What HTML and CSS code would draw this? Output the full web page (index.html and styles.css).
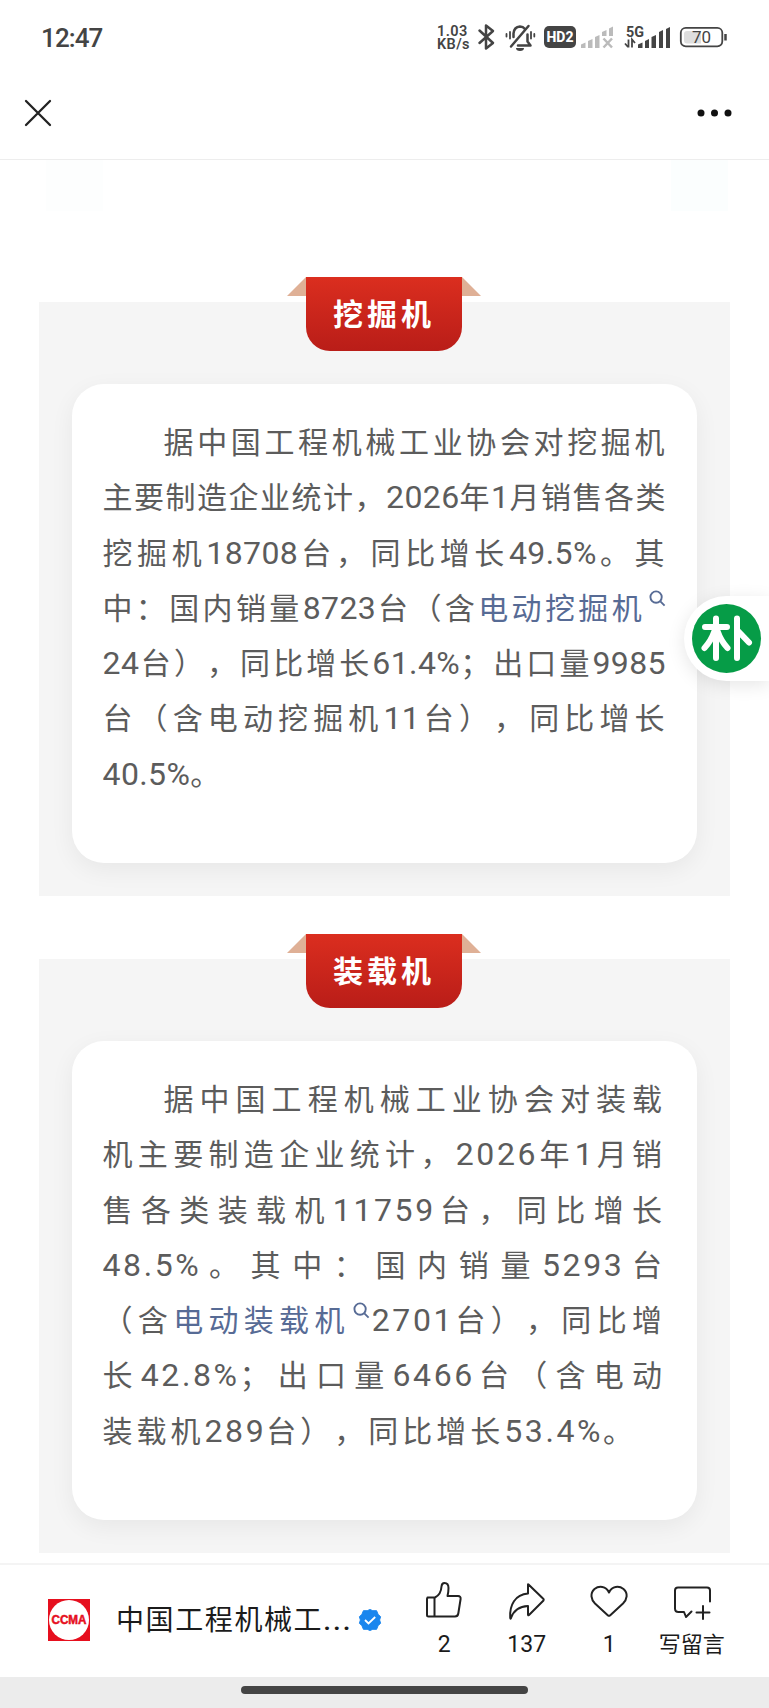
FILE: index.html
```html
<!DOCTYPE html>
<html lang="zh-CN">
<head>
<meta charset="utf-8">
<title>中国工程机械工业协会</title>
<link rel="stylesheet" href="styles.css">
</head>
<body>
<div class="screen">
  <header class="status">
    <span class="clock">12:47</span>
    <span class="speed"><span>1.03</span><span>KB/s</span></span>
    <svg class="status-icons" viewBox="470 15 260 45" width="260" height="45">
      <g fill="none" stroke="#444" stroke-width="2.5" stroke-linejoin="round" stroke-linecap="round">
        <path d="M479.500 30.500L493 43L486 48.500V25.500L493 31L479.500 43"/>
        <path d="M518 45.500H530.500L527.500 41.500V34.500M525 29Q523 26.500 520 26.500Q514 27 513.500 33.500V37"/>
        <path d="M511 46.500L528.500 26"/>
        <path d="M510 32V38.500M531 32V38.500M506.500 34V36.500M534.300 34V36.500" stroke-width="1.800"/>
      </g>
      <path d="M516 48h8a4 3 0 0 1-8 0z" fill="#444"/>
      <rect x="544" y="26" width="32" height="22" rx="5" fill="#444"/>
      <text class="hd" x="560" y="42" text-anchor="middle" textLength="27" lengthAdjust="spacingAndGlyphs">HD2</text>
      <g fill="#bbb">
        <path d="M581 48v-3.500l4.500-2V48zM588 48v-7l4.500-2V48zM595 48V37l4.500-2V48zM602 36v-4l4.500-2v6zM609 36v-7.500l4-2V36z"/>
      </g>
      <path d="M603.500 38.500l8.500 9M612 38.500l-8.500 9" stroke="#bbb" stroke-width="2.500"/>
      <text class="fiveg" x="626" y="36.500" textLength="18" lengthAdjust="spacingAndGlyphs">5G</text>
      <path d="M628.500 39.500v8M625 43.500l3 3.500M632 47.500v-8l3 3.500" stroke="#444" stroke-width="1.800" fill="none"/>
      <path d="M638 48v-3.500l4.500-2V48zM645 48v-7l4-2V48zM651.500 48V37l4.500-2V48zM659 48V32l4-2v18zM666 48V29l4-2v21z" fill="#444"/>
      <rect x="680.800" y="27.800" width="41.500" height="18.500" rx="5" fill="#fff" stroke="#444" stroke-width="1.800"/>
      <path d="M687 31h14v12.500h-14q-3 0-3-3v-6.500q0-3 3-3z" fill="#dedede"/>
      <path d="M725.500 34v6.500" stroke="#444" stroke-width="2.500"/>
      <text class="batt" x="701.500" y="42.700" text-anchor="middle">70</text>
    </svg>
  </header>
  <nav class="nav">
    <svg width="28" height="28" viewBox="0 0 28 28"><path d="M2 2L26 26M26 2L2 26" stroke="#222" stroke-width="2.300" stroke-linecap="round"/></svg>
    <svg width="36" height="8" viewBox="0 0 36 8"><g fill="#111"><circle cx="4" cy="4" r="3.500"/><circle cx="17.500" cy="4" r="3.500"/><circle cx="31" cy="4" r="3.500"/></g></svg>
  </nav>
  <main class="article">
    <div class="ghost"><i></i><i></i></div>
    <section class="block">
      <h2 class="ribbon">挖掘机</h2>
      <div class="card tight">
        <p class="line first">据中国工程机械工业协会对挖掘机</p>
        <p class="line">主要制造企业统计，<span class="n">2026</span>年<span class="n">1</span>月销售各类</p>
        <p class="line">挖掘机<span class="n">18708</span>台，同比增长<span class="n">49.5%</span>。其</p>
        <p class="line">中：国内销量<span class="n">8723</span>台（含<a class="term">电动挖掘机<svg class="mag" viewBox="0 0 18 18"><circle cx="7.500" cy="7.500" r="6"/><path d="M12 12l4.500 4.500"/></svg></a></p>
        <p class="line"><span class="n">24</span>台），同比增长<span class="n">61.4%</span>；出口量<span class="n">9985</span></p>
        <p class="line">台（含电动挖掘机<span class="n">11</span>台），同比增长</p>
        <p class="line last"><span class="n">40.5%</span>。</p>
      </div>
    </section>
    <section class="block">
      <h2 class="ribbon">装载机</h2>
      <div class="card loose">
        <p class="line first">据中国工程机械工业协会对装载</p>
        <p class="line">机主要制造企业统计，<span class="n">2026</span>年<span class="n">1</span>月销</p>
        <p class="line">售各类装载机<span class="n">11759</span>台，同比增长</p>
        <p class="line"><span class="n">48.5%</span>。其中：国内销量<span class="n">5293</span>台</p>
        <p class="line">（含<a class="term">电动装载机<svg class="mag" viewBox="0 0 18 18"><circle cx="7.500" cy="7.500" r="6"/><path d="M12 12l4.500 4.500"/></svg></a><span class="n">2701</span>台），同比增</p>
        <p class="line">长<span class="n">42.8%</span>；出口量<span class="n">6466</span>台（含电动</p>
        <p class="line last">装载机<span class="n">289</span>台），同比增长<span class="n">53.4%</span>。</p>
      </div>
    </section>
  </main>
  <footer class="bar">
    <svg class="logo" width="42" height="42" viewBox="0 0 42 42"><rect width="42" height="42" fill="#e60f1e"/><circle cx="21" cy="21" r="20" fill="#fff"/><text x="21" y="25.300" text-anchor="middle" textLength="35" lengthAdjust="spacingAndGlyphs">CCMA</text></svg>
    <span class="name">中国工程机械工<span class="dots">...</span></span>
    <svg class="badge" width="24" height="24" viewBox="0 0 24 24"><path d="M12 1.500l2.800 1.200h3.800l1.400 3.500 2.600 2.600-1 3.200 1 3.200-2.600 2.600-1.400 3.500h-3.800L12 22.500l-2.800-1.200H5.400L4 17.800l-2.600-2.600 1-3.200-1-3.200L4 6.200l1.400-3.500h3.800z" fill="#1a86ee" stroke="#1a86ee" stroke-width="1" stroke-linejoin="round"/><path d="M7 12l3.500 3.500L17.200 9" fill="none" stroke="#fff" stroke-width="1.800"/></svg>
    <div class="actions">
      <div class="act"><svg width="40" height="40" viewBox="0 0 40 40"><path d="M3.500 17.500H11Q17 14.500 17.500 6.500Q17.800 3 20.500 3Q24.500 3 24.500 8Q24.500 12 23.500 16H34Q37 16.200 36.600 19L34.300 33.500Q33.800 36.500 31 36.500H4.500Q3 36.500 3 35V19Q3 17.500 4.500 17.500M10.500 17.500V36.500"/></svg><span>2</span></div>
      <div class="act"><svg width="40" height="40" viewBox="0 0 40 40"><path d="M21 4.500Q21 4 21.500 4.500L36.500 19Q37 19.800 36.500 20.500L22 35Q21 35.800 21 34.500V26Q8 26.500 4 38Q3.300 39.500 3.200 37.500C2.500 25 8 14.500 21 13.500z"/></svg><span>137</span></div>
      <div class="act"><svg width="40" height="40" viewBox="0 0 40 40"><path d="M20 12.500C23 6 30 5.500 34.500 9C39.500 13.500 38 19.500 34 23.500L21 35.500Q20 36.200 19 35.500L6 23.500C2 19.500 .8 13.500 5.500 9C10 5.500 17 6 20 12.500z"/></svg><span>1</span></div>
      <div class="act"><svg width="40" height="40" viewBox="0 0 40 40"><path d="M19.500 31.500L14 37L12 32H6.500Q3 32 3 28.500V10.500Q3 7.500 6 7.500H35Q38 7.500 38 10.500V21.500M31 26V39M24.500 32.500H37.500"/></svg><span>写留言</span></div>
    </div>
  </footer>
  <div class="home"><span></span></div>
  <div class="float"><svg width="70" height="70" viewBox="0 0 70 70"><circle cx="34.500" cy="34.500" r="34.500" fill="#069c47"/><path d="M13 23H35M24 14.500V54M22.500 27Q19 37 12.500 44M25.500 27Q29 37 35.500 44M45 14.500V54M47 28L57 38.500" fill="none" stroke="#fff" stroke-width="6" stroke-linecap="round"/></svg></div>
</div>
</body>
</html>
```

FILE: styles.css
```css
* { box-sizing: border-box; margin: 0; padding: 0; }
body { background: #fff; font-family: Roboto, "Noto Sans CJK SC", sans-serif; }
.screen { position: relative; width: 769px; height: 1708px; overflow: hidden; display: flex; flex-direction: column; }
svg { display: block; flex: none; }

.status { height: 75px; padding: 15px 0 0 41px; display: flex; align-items: flex-start; color: #444; }
.clock { width: 396px; font-size: 26px; font-weight: 500; line-height: 46px; letter-spacing: -.9px; }
.speed { width: 33px; padding-top: 11px; display: flex; flex-direction: column; gap: 1.5px; font-size: 14.500px; line-height: 11.500px; font-weight: 600; white-space: nowrap; letter-spacing: .4px; }
.speed span { height: 11.500px; }
.status-icons text { font-family: Roboto, sans-serif; }
.hd { font-size: 14px; font-weight: 800; fill: #fff; }
.fiveg { font-size: 14px; font-weight: 700; fill: #444; }
.batt { font-size: 17px; fill: #444; }

.nav { height: 85px; padding: 0 36px 9px 24px; display: flex; justify-content: space-between; align-items: center; border-bottom: 1px solid #ededed; }

.article { height: 1403px; }
.ghost { height: 51px; padding: 0 41px 0 46px; display: flex; justify-content: space-between; }
.ghost i { width: 57px; height: 51px; background: #fdfefe; }
.ghost i:last-child { background: #fbfefe; }
.block { width: 691px; height: 594px; margin: 91px 0 0 39px; padding: 82px 33px 0 32.500px; background: #f5f5f5; position: relative; }
.block + .block { margin-top: 63px; }
.ribbon { position: absolute; left: 267px; top: -25px; width: 156px; height: 74px; border-radius: 0 0 24px 24px; background: linear-gradient(#db2e1f, #b91d18); color: #fff; font-size: 30px; font-weight: 700; letter-spacing: 4px; line-height: 76px; text-align: center; }
.ribbon::before, .ribbon::after { content: ""; position: absolute; top: 0; width: 19px; height: 19px; background: #dfb096; }
.ribbon::before { left: -19px; clip-path: polygon(100% 0, 100% 100%, 0 100%); }
.ribbon::after { right: -19px; clip-path: polygon(0 0, 100% 100%, 0 100%); }
.card { height: 479px; padding: 31px 31px 0; border-radius: 32px; background: #fff; box-shadow: 0 7px 24px rgba(0, 0, 0, .06); color: #5c5c5c; font-size: 30px; }
.line { height: 55.3px; line-height: 55.3px; white-space: nowrap; text-align: justify; text-align-last: justify; text-spacing-trim: space-all; }
.first { padding-left: 61px; }
.last { text-align-last: left; }
.tight { letter-spacing: 1.5px; }
.loose { letter-spacing: 4px; }
.n { font-size: 32px; line-height: 1; letter-spacing: .4px; }
.loose .n { letter-spacing: 2.6px; }
.term { color: #576b95; }
.mag { display: inline-block; width: 17px; height: 17px; margin-left: 4px; vertical-align: 12px; fill: none; stroke: #576b95; stroke-width: 2; }
.loose .mag { margin: 0 2px 0 3px; }

.bar { height: 114px; border-top: 2px solid #f4f4f4; display: flex; align-items: flex-start; padding-left: 48px; color: #1b1b1b; background: #fff; }
.logo { margin-top: 34px; }
.logo text { font: 900 12px "Liberation Sans", sans-serif; fill: #e60f1e; stroke: #e60f1e; stroke-width: .5px; }
.name { width: 237px; margin: 35px 0 0 26px; font-size: 28px; line-height: 42px; letter-spacing: 1.6px; white-space: nowrap; }
.dots { font-weight: 500; letter-spacing: 2px; }
.badge { margin: 43px 0 0 5px; }
.actions { display: flex; margin-left: 21px; }
.act { width: 82.500px; display: flex; flex-direction: column; align-items: center; padding-top: 15px; font-size: 23px; line-height: 30px; white-space: nowrap; }
.act svg { fill: none; stroke: #222; stroke-width: 2; stroke-linejoin: round; stroke-linecap: round; }
.act span { margin-top: 10px; }
.act:last-child { font-size: 22px; }
.home { height: 31px; background: #ececec; padding-top: 9px; display: flex; justify-content: center; align-items: flex-start; }
.home span { width: 287px; height: 8px; border-radius: 4px; background: #444; }

.float { position: absolute; right: 0; top: 596px; width: 85px; height: 85px; padding: 8px; border-radius: 43px 0 0 43px; background: #fff; box-shadow: 0 4px 18px rgba(0, 0, 0, .1); }
```
